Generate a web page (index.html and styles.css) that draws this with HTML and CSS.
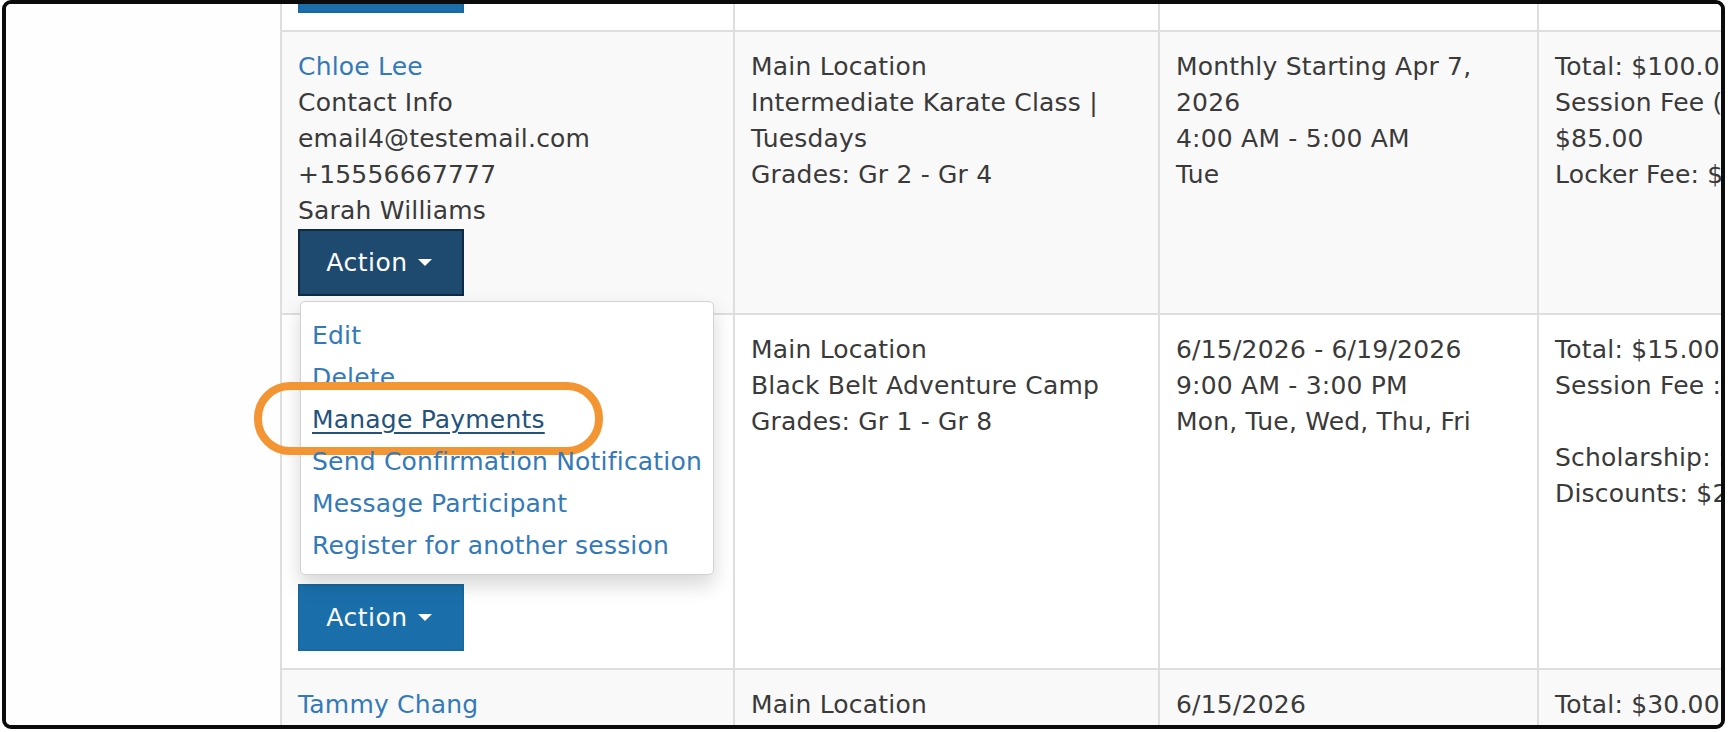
FILE: index.html
```html
<!DOCTYPE html>
<html lang="en">
<head>
<meta charset="utf-8">
<title>Registrations</title>
<link rel="stylesheet" href="styles.css">
</head>
<body>
<div class="frame">
  <aside class="sidebar"></aside>
  <main class="main">
    <div class="table">
      <div class="row">
        <div class="cell">
          <a class="link" href="#">Noah Kim</a>
          <div>Contact Info</div>
          <div>email3@testemail.com</div>
          <div>+15554443333</div>
          <div>David Kim</div>
          <div class="btn-group">
            <button class="btn btn-primary" type="button">Action <span class="caret"></span></button>
          </div>
        </div>
        <div class="cell">
          <div>Main Location</div>
          <div>Beginner Karate Class</div>
          <div>Grades: K - Gr 2</div>
        </div>
        <div class="cell">
          <div>Monthly Starting Apr 6, 2026</div>
          <div>3:00 PM - 4:00 PM</div>
          <div>Mon</div>
        </div>
        <div class="cell">
          <div>Total: $85.00</div>
          <div>Session Fee (per month): $85.00</div>
        </div>
      </div>

      <div class="row striped">
        <div class="cell">
          <a class="link" href="#">Chloe Lee</a>
          <div>Contact Info</div>
          <div>email4@testemail.com</div>
          <div>+15556667777</div>
          <div>Sarah Williams</div>
          <div class="btn-group open">
            <button class="btn btn-primary active" type="button">Action <span class="caret"></span></button>
            <ul class="dropdown-menu">
              <li><a href="#">Edit</a></li>
              <li><a href="#">Delete</a></li>
              <li class="highlighted"><a class="hover" href="#">Manage Payments</a><span class="highlight"></span></li>
              <li><a href="#">Send Confirmation Notification</a></li>
              <li><a href="#">Message Participant</a></li>
              <li><a href="#">Register for another session</a></li>
            </ul>
          </div>
        </div>
        <div class="cell">
          <div>Main Location</div>
          <div>Intermediate Karate Class | Tuesdays</div>
          <div>Grades: Gr 2 - Gr 4</div>
        </div>
        <div class="cell">
          <div>Monthly Starting Apr 7, 2026</div>
          <div>4:00 AM - 5:00 AM</div>
          <div>Tue</div>
        </div>
        <div class="cell">
          <div>Total: $100.00</div>
          <div>Session Fee (per month): $85.00</div>
          <div>Locker Fee: $15.00</div>
        </div>
      </div>

      <div class="row">
        <div class="cell">
          <div class="covered">
            <a class="link" href="#">Ethan Lee</a>
            <div>Contact Info</div>
            <div>email4@testemail.com</div>
            <div>+15556667777</div>
            <div>Sarah Williams</div>
            <div>Allergies: None</div>
            <div>Shirt Size: Youth M</div>
          </div>
          <div class="btn-group">
            <button class="btn btn-primary" type="button">Action <span class="caret"></span></button>
          </div>
        </div>
        <div class="cell">
          <div>Main Location</div>
          <div>Black Belt Adventure Camp</div>
          <div>Grades: Gr 1 - Gr 8</div>
        </div>
        <div class="cell">
          <div>6/15/2026 - 6/19/2026</div>
          <div>9:00 AM - 3:00 PM</div>
          <div>Mon, Tue, Wed, Thu, Fri</div>
        </div>
        <div class="cell">
          <div>Total: $15.00</div>
          <div>Session Fee : $60.00</div>
          <div class="blank">&nbsp;</div>
          <div>Scholarship: $25.00</div>
          <div>Discounts: $20.00</div>
        </div>
      </div>

      <div class="row striped">
        <div class="cell">
          <a class="link" href="#">Tammy Chang</a>
          <div>Contact Info</div>
        </div>
        <div class="cell">
          <div>Main Location</div>
        </div>
        <div class="cell">
          <div>6/15/2026</div>
        </div>
        <div class="cell">
          <div>Total: $30.00</div>
        </div>
      </div>
    </div>
  </main>
</div>
</body>
</html>
```

FILE: styles.css
```css
html, body {
  margin: 0;
  padding: 0;
  background: #ffffff;
  overflow: hidden;
}

body {
  font-family: "DejaVu Sans", "Open Sans", sans-serif;
  font-size: 25px;
  line-height: 36px;
  letter-spacing: 0.2px;
  color: #3a3a3a;
}

.frame {
  box-sizing: border-box;
  height: 729px;
  margin: 0 6px 0 2px;
  border: 4px solid #0b0b0b;
  border-radius: 9px;
  overflow: hidden;
  display: flex;
  background: #ffffff;
}

.sidebar {
  flex: none;
  width: 274px;
  background: #fefefe;
}

.main {
  flex: 1;
  min-width: 0;
}

.table {
  margin-top: -255px;
  width: max-content;
}

.row {
  display: grid;
  grid-template-columns: 455px 425px 379px 420px;
  background: #ffffff;
}

.row.striped {
  background: #f9f9f9;
}

.cell {
  box-sizing: border-box;
  padding: 17px 16px;
  border-right: 2px solid #dedede;
  border-bottom: 2px solid #dedede;
  min-width: 0;
}

.cell:first-child {
  border-left: 2px solid #dedede;
}

.covered {
  visibility: hidden;
}

.link {
  display: block;
  color: #3479b8;
  text-decoration: none;
}

.btn-group {
  position: relative;
  width: 166px;
}

.btn {
  box-sizing: border-box;
  width: 166px;
  height: 67px;
  display: flex;
  align-items: center;
  justify-content: center;
  gap: 10px;
  margin: 0;
  padding: 0 4px 0 0;
  font-family: inherit;
  font-size: 25px;
  letter-spacing: 0.5px;
  color: #ffffff;
  border-radius: 0;
  cursor: pointer;
}

.btn-primary {
  background: #1a6fab;
  border: 2px solid #1868a2;
}

.btn-primary.active {
  background: #1f4a70;
  border-color: #102a42;
}

.caret {
  display: block;
  width: 0;
  height: 0;
  border-top: 7px solid #ffffff;
  border-left: 7px solid transparent;
  border-right: 7px solid transparent;
}

.dropdown-menu {
  position: absolute;
  top: 100%;
  left: 2px;
  z-index: 10;
  box-sizing: border-box;
  width: 414px;
  margin: 5px 0 0;
  padding: 13px 0 7px;
  list-style: none;
  background: #ffffff;
  border: 1px solid #d2d2d2;
  border-radius: 5px;
  box-shadow: 0 10px 20px rgba(0, 0, 0, 0.16);
}

.dropdown-menu li {
  position: relative;
  height: 42px;
  display: flex;
  align-items: center;
}

.dropdown-menu a {
  display: block;
  padding: 0 11px;
  color: #3479b8;
  text-decoration: none;
  white-space: nowrap;
}

.dropdown-menu a.hover {
  color: #23527c;
  text-decoration: underline;
  text-decoration-thickness: 2px;
  text-underline-offset: 4px;
}

.highlight {
  position: absolute;
  left: -47px;
  top: -17px;
  width: 349px;
  height: 73px;
  box-sizing: border-box;
  border: 8px solid #f39532;
  border-radius: 36px;
  pointer-events: none;
}
```
